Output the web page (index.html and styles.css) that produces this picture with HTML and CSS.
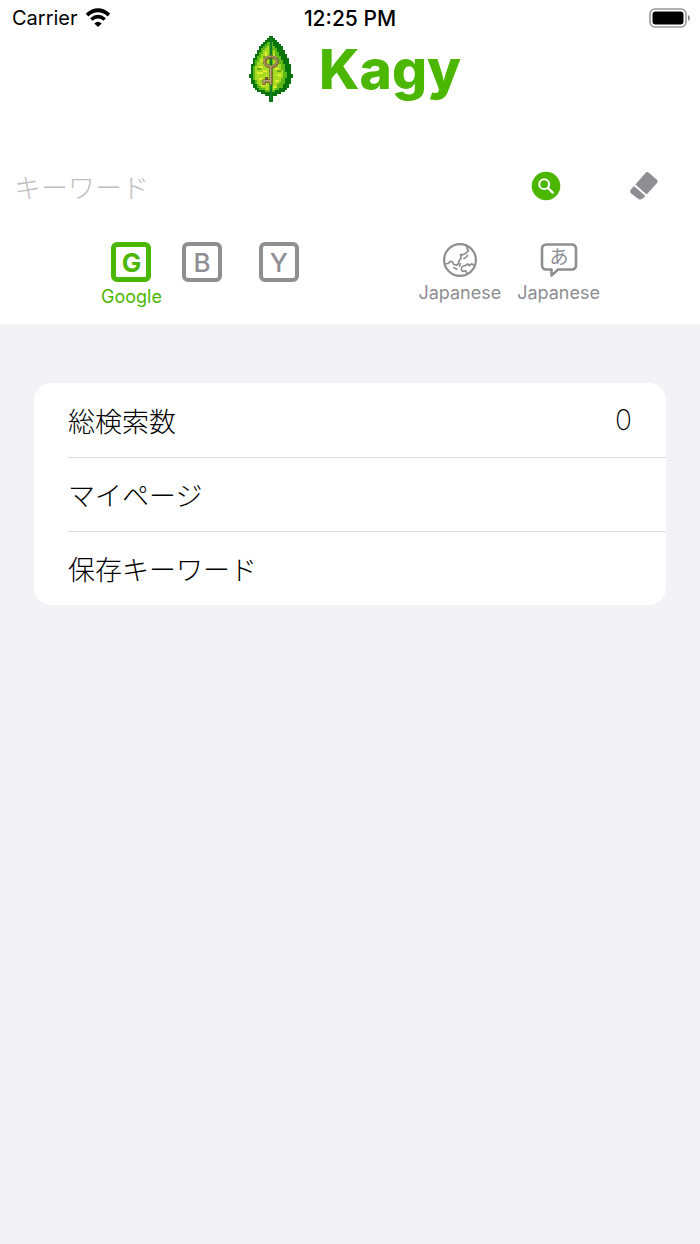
FILE: index.html
```html
<!DOCTYPE html>
<html lang="ja">
<head>
<meta charset="utf-8">
<meta name="viewport" content="width=device-width, initial-scale=1">
<title>Kagy</title>
<link rel="stylesheet" href="styles.css">
</head>
<body>
<header class="top">
  <div class="status">
    <div class="carrier">
      <span>Carrier</span>
      <svg class="wifi" viewBox="0 0 26 20" aria-hidden="true">
        <path d="M2 7Q13 -2.500 24 7" fill="none" stroke="#000" stroke-width="3.800"/>
        <path d="M6.300 11.500Q13 5.800 19.700 11.500" fill="none" stroke="#000" stroke-width="3.600"/>
        <path d="M9.300 15.400Q13 12 16.700 15.400L13 19Z"/>
      </svg>
    </div>
    <time class="clock">12:25 PM</time>
    <svg class="battery" viewBox="0 0 42 20" aria-hidden="true">
      <rect x="1" y="1" width="36" height="18" rx="5" fill="none" stroke="#999" stroke-width="1.600"/>
      <rect x="3.500" y="3.500" width="31" height="13" rx="3"/>
      <path d="M39 7Q41 8 41 10T39 13Z" fill="#888"/>
    </svg>
  </div>

  <div class="brand">
    <svg class="leaf" viewBox="0 0 22 33" shape-rendering="crispEdges" aria-hidden="true">
      <path fill="#08740a" d="M10 0H12V1H13V2H14V3H15V4H16V5H17V7H18V9H19V11H20V14H21V19H22V21H21V24H20V26H19V27H18V28H16V29H14V30H12V33H10V30H8V29H6V28H4V27H3V26H2V24H1V21H0V19H1V14H2V11H3V9H4V7H5V5H6V4H7V3H8V2H9V1H10Z"/>
      <path fill="#5cb814" d="M9 3H12V5H13V6H14V8H15V10H16V12H17V14H18V18H19V21H18V24H17V26H15V27H13V28H8V27H5V26H4V24H3V22H2V15H3V12H4V10H5V8H6V6H7V5H8V4H9Z"/>
      <path fill="#a9da22" d="M9 5H10V27H8V26H6V25H5V24H4V22H3V15H4V13H5V11H6V9H7V7H8V6H9ZM12 7H13V10H14V12H15V14H16V17H17V21H16V23H15V25H13V27H12Z"/>
      <path fill="#dcec2e" d="M8 8H9V10H8ZM6 12H8V13H6ZM5 15H7V16H5ZM4 18H7V19H4ZM7 17H9V18H7ZM5 21H7V22H5ZM6 24H9V25H6ZM8 20H9V21H8ZM13 16H15V17H13ZM14 19H16V20H14ZM13 22H15V23H13ZM12 25H14V26H12ZM12 9H13V10H12Z"/>
      <path fill="#69a617" d="M7 10H8V11H7ZM4 16H6V17H4ZM7 23H8V24H7ZM14 17H16V18H14ZM14 24H15V25H14Z"/>
      <path fill="#137c29" d="M10.500 1H11.500V32H10.500Z"/>
      <g shape-rendering="auto">
        <ellipse cx="11" cy="12.900" rx="3.200" ry="2.500" fill="none" stroke="#71552b" stroke-width="1.600"/>
        <path d="M11 15.500V24.500M8.800 20.500V22M11 22.600H7.500V24.500" fill="none" stroke="#71552b" stroke-width="1.600"/>
        <ellipse cx="10.800" cy="12.700" rx="3.200" ry="2.500" fill="none" stroke="#ab9567" stroke-width=".8"/>
        <path d="M10.800 15.500V24.300M10.500 22.400H7.500V24" fill="none" stroke="#b9a67d" stroke-width=".8"/>
      </g>
    </svg>
    <h1 class="name">Kagy</h1>
  </div>

  <form class="search" onsubmit="return false">
    <input class="query" type="text" aria-label="キーワード" placeholder="キーワード">
    <button class="tool" type="submit" aria-label="検索">
      <svg viewBox="0 0 30 30">
        <circle cx="15" cy="15" r="14.300" fill="#4bb700"/>
        <circle cx="13.200" cy="13.200" r="4.900" fill="none" stroke="#fff" stroke-width="2"/>
        <path d="M17 17L21.800 21.600" stroke="#fff" stroke-width="2.400" stroke-linecap="round"/>
      </svg>
    </button>
    <button class="tool" type="reset" aria-label="消去">
      <svg viewBox="0 0 30 30" fill="#8e8e93">
        <path d="M6.300 13.600L16.500 2.100Q18.200 .2 20.200 1.900L27.700 8.400Q29.700 10.200 28 12.100L17.700 23.500Z"/>
        <path d="M5 15L16.300 25L14.500 27.100Q12.600 29 9.900 28.300L3.500 23.500Q1 22 1.200 20.200Q1.300 18.900 2.200 17.900Z"/>
      </svg>
    </button>
  </form>

  <nav class="options">
    <div class="engines">
      <button class="option active" type="button"><span class="key">G</span><span class="label">Google</span></button>
      <button class="option" type="button"><span class="key">B</span></button>
      <button class="option last" type="button"><span class="key">Y</span></button>
    </div>
    <div class="locales">
      <button class="option" type="button">
        <svg class="glyph" viewBox="0 0 36 36" fill="none" stroke="#8e8e93" stroke-linecap="round" stroke-linejoin="round" aria-hidden="true">
          <circle cx="18" cy="18" r="15.900" stroke-width="2.200"/>
          <path stroke-width="1.700" d="M23.300 3.400Q25.500 4 25 6L26.500 8.700L23.500 11.500L20.800 12.800L18.500 12.300L19 16.300L16.800 19.500L16.500 21.800L14.300 23.300L11.500 22.300L10.600 20L8.500 19.300L6 21.500L2.800 21.800M22 16.400L23.300 15.800M24.500 14.800L25.500 13.600M12 25.700L14.800 27.300M17.500 24L18.500 21.800M31.500 23L29.500 21.800L27.500 23.500L25.600 22L23.300 23.500L20 24.800Q18.600 28 20.500 29.300L23.500 28.800L25 31.300"/>
        </svg>
        <span class="label">Japanese</span>
      </button>
      <button class="option" type="button">
        <svg class="glyph wide" viewBox="0 0 38 36" fill="none" aria-hidden="true">
          <path stroke="#8e8e93" stroke-width="2.600" stroke-linejoin="round" d="M6.500 2.500H31.500Q36 2.500 36 7V23Q36 27.500 31.500 27.500H18L11.500 33.600V27.500H6.500Q2 27.500 2 23V7Q2 2.500 6.500 2.500Z"/>
          <text class="kana" x="19" y="22" text-anchor="middle">あ</text>
        </svg>
        <span class="label">Japanese</span>
      </button>
    </div>
  </nav>
</header>

<main class="content">
  <ul class="list">
    <li class="row"><span>総検索数</span><span class="count">0</span></li>
    <li class="row"><span>マイページ</span></li>
    <li class="row"><span>保存キーワード</span></li>
  </ul>
</main>
</body>
</html>
```

FILE: styles.css
```css
* {
  box-sizing: border-box;
}

body {
  margin: 0;
  min-height: 100vh;
  background: #f2f2f7;
  color: #000;
  font-family: Inter, "Noto Sans CJK JP", sans-serif;
}

button {
  padding: 0;
  border: 0;
  background: none;
  font: inherit;
  color: inherit;
}

svg {
  display: block;
}

.top {
  background: #fff;
  padding-bottom: 12px;
}

.status {
  display: grid;
  grid-template-columns: 1fr auto 1fr;
  align-items: center;
  height: 36px;
  padding: 0 9px;
  font-size: 20px;
}

.carrier {
  display: flex;
  align-items: center;
  gap: 7px;
  padding-left: 3px;
}

.wifi {
  width: 26px;
  height: 20px;
}

.clock {
  font-size: 21px;
  font-weight: 500;
}

.battery {
  justify-self: end;
  width: 42px;
  height: 20px;
}

.brand {
  display: flex;
  justify-content: center;
  align-items: center;
  gap: 26px;
  height: 66px;
  padding-left: 10px;
}

.leaf {
  width: 44px;
  height: 66px;
}

.name {
  margin: 0;
  color: #4bb700;
  font-size: 55px;
  line-height: 66px;
  font-weight: 800;
}

.search {
  display: flex;
  align-items: center;
  margin-top: 60px;
  padding: 0 41px 0 14px;
  gap: 68px;
}

.query {
  flex: 1;
  min-width: 0;
  height: 48px;
  padding: 0;
  border: 0;
  outline: 0;
  background: none;
  font-family: "Noto Sans CJK JP", sans-serif;
  font-size: 27px;
  font-weight: 300;
}

.query::placeholder {
  color: #c0c0c2;
}

.tool svg {
  width: 30px;
  height: 30px;
}

.options {
  display: flex;
  justify-content: space-between;
  margin-top: 32px;
  padding: 0 100px 0 101px;
  color: #8e8e93;
}

.engines,
.locales {
  display: flex;
  align-items: flex-start;
}

.engines {
  gap: 20px;
}

.locales {
  gap: 16px;
}

.option {
  display: flex;
  flex-direction: column;
  align-items: center;
}

.last {
  margin-left: 17px;
}

.key {
  display: flex;
  align-items: center;
  justify-content: center;
  width: 40px;
  height: 40px;
  border: 4px solid currentColor;
  border-radius: 6px;
  font-size: 26px;
  font-weight: 500;
}

.active {
  color: #4bb700;
}

.active .key {
  border-width: 5px;
  font-weight: 700;
}

.label {
  font-size: 18px;
  line-height: 30px;
}

.glyph {
  width: 36px;
  height: 36px;
}

.wide {
  width: 38px;
}

.kana {
  fill: #8e8e93;
  font-family: "Noto Sans CJK JP", sans-serif;
  font-size: 19px;
  font-weight: 400;
}

.content {
  padding: 59px 34px;
}

.list {
  margin: 0;
  padding: 0 0 0 34px;
  border-radius: 17px;
  background: #fff;
  list-style: none;
}

.row {
  display: flex;
  align-items: center;
  justify-content: space-between;
  height: 74px;
  padding-right: 34px;
  font-family: "Noto Sans CJK JP", sans-serif;
  font-size: 27px;
  font-weight: 300;
}

.row + .row {
  border-top: 1px solid #dcdcde;
}

.count {
  font-family: Inter, sans-serif;
  font-size: 28px;
  font-weight: 200;
}
```
